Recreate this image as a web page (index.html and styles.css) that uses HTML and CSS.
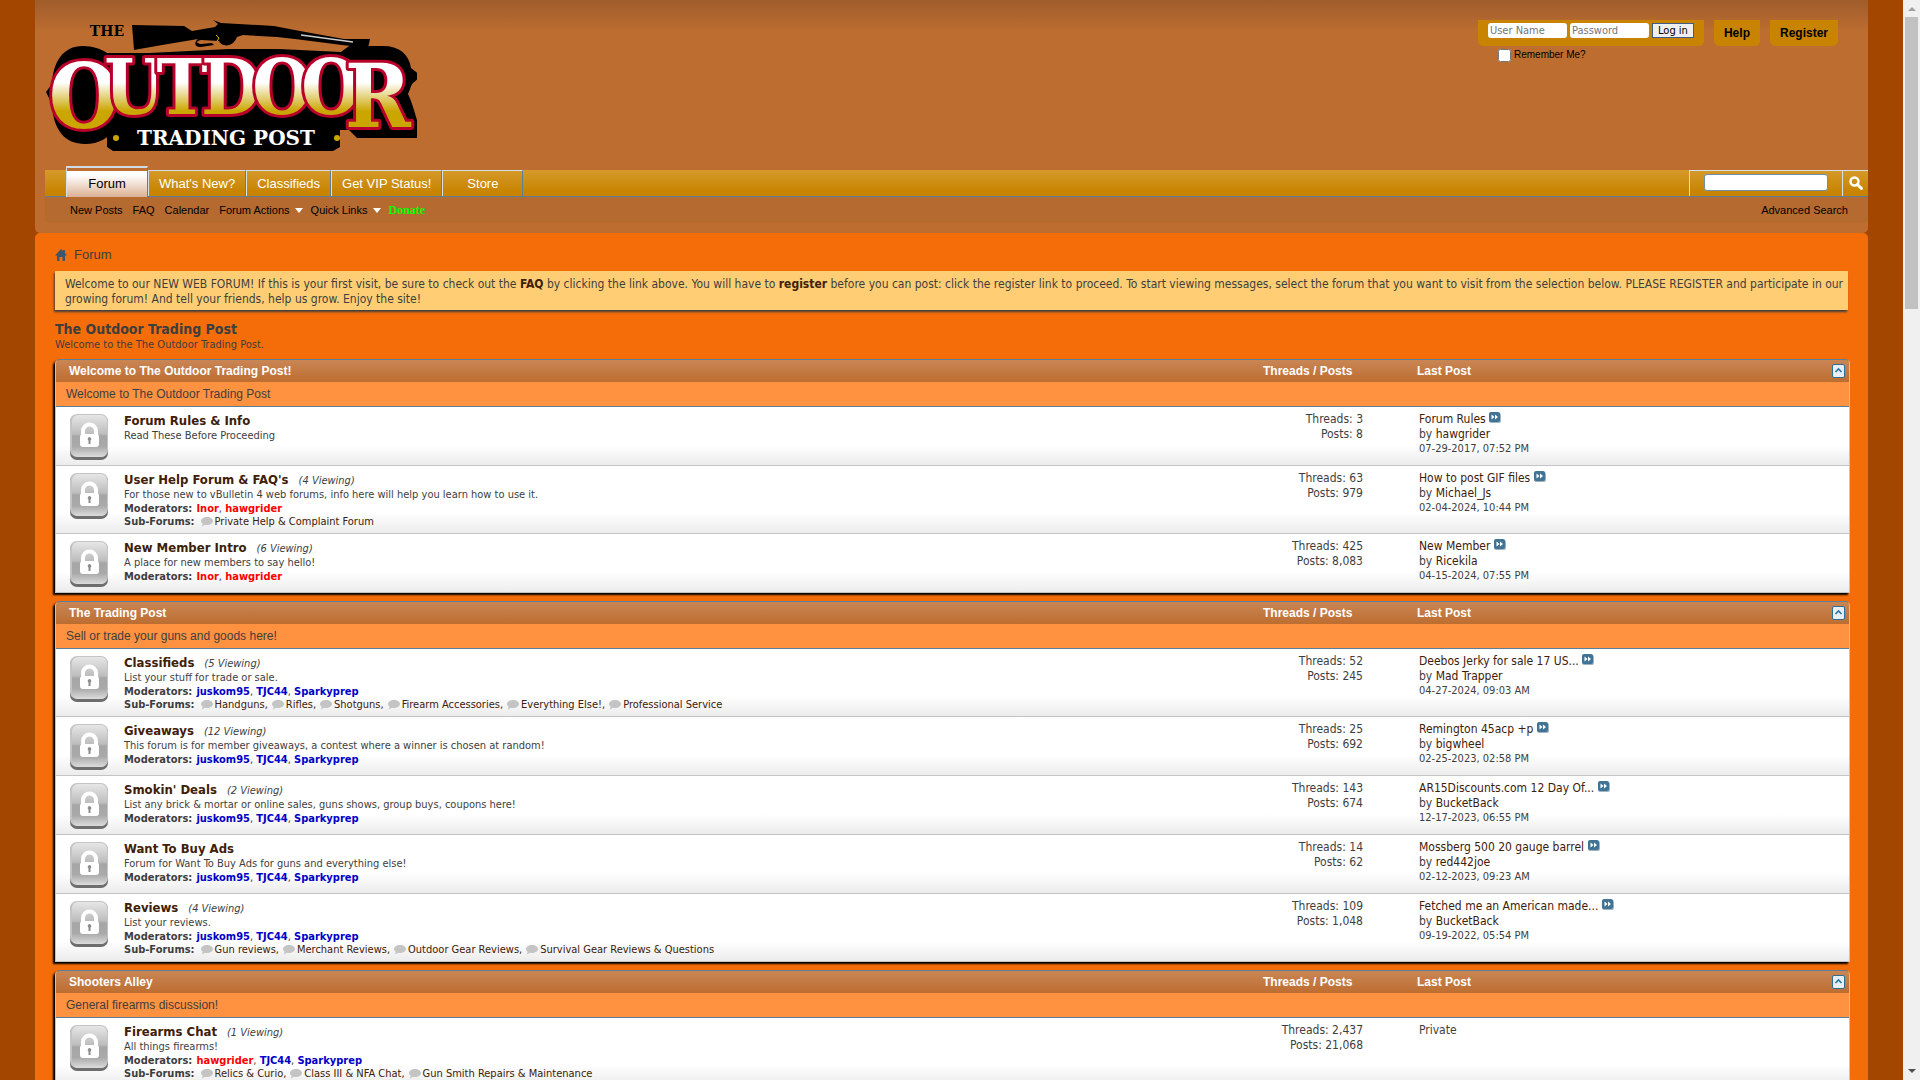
FILE: index.html
```html
<!DOCTYPE html>
<html lang="en">
<head>
<meta charset="utf-8">
<title>The Outdoor Trading Post</title>
<link rel="stylesheet" href="styles.css">
</head>
<body>
<svg class="defs" aria-hidden="true">
  <defs>
    <linearGradient id="btn" x1="0" y1="0" x2="0" y2="1">
      <stop offset="0" stop-color="#e6e6e6"/><stop offset=".45" stop-color="#bdbdbd"/>
      <stop offset=".5" stop-color="#a6a6a6"/><stop offset=".75" stop-color="#a9a9a9"/><stop offset="1" stop-color="#dcdcdc"/>
    </linearGradient>
    <linearGradient id="gold" gradientUnits="userSpaceOnUse" x1="0" y1="30" x2="0" y2="120">
      <stop offset="0" stop-color="#fff"/><stop offset=".36" stop-color="#fff"/>
      <stop offset=".68" stop-color="#cba600"/><stop offset="1" stop-color="#cba600"/>
    </linearGradient>
    <symbol id="lock" viewBox="0 0 40 48">
      <rect x="1" y="2" width="38" height="45" rx="7" fill="#6e6e6e"/>
      <rect x="1" y="1" width="38" height="43" rx="7" fill="#c4c4c4"/>
      <rect x="3" y="2" width="35" height="42" rx="6" fill="url(#btn)"/>
      <path d="M14 23v-5a6.500 6.500 0 0 1 13 0v5" fill="none" stroke="#fff" stroke-width="4"/>
      <rect x="11" y="21" width="19" height="13" rx="3" fill="#fff"/>
      <path d="M20.500 24a2 2 0 0 1 1 3.600v3.400h-2v-3.400a2 2 0 0 1 1-3.600z" fill="#8c8c8c"/>
    </symbol>
    <symbol id="bubble" viewBox="0 0 12 10">
      <path d="M6 0c3.300 0 6 1.800 6 4s-2.700 4-6 4c-.7 0-1.400-.1-2-.2L1 9.500l.6-2.900C.6 5.900 0 5 0 4c0-2.200 2.700-4 6-4z" fill="#c4c4c4"/>
    </symbol>
    <symbol id="go" viewBox="0 0 12 11">
      <rect width="12" height="10" y="1" rx="2" fill="#9fb4c0"/><rect width="11" height="10" rx="2" fill="#417394"/>
      <path d="M2.500 2.500l3 2.500-3 2.500zM6 2.500l3 2.500-3 2.500z" fill="#fff"/>
    </symbol>
    <symbol id="up" viewBox="0 0 13 14">
      <rect x=".5" y=".5" width="12" height="13" rx="1.500" fill="#e8eef2" stroke="#2a6f96"/>
      <path d="M3.500 8l3-3 3 3" fill="none" stroke="#1f7aa6" stroke-width="1.600"/>
    </symbol>
    <symbol id="down" viewBox="0 0 8 5"><path d="M0 0h8L4 5z" fill="#fff"/></symbol>
  </defs>
</svg>

<div class="page">
  <header class="header">
    <div class="top">
      <a class="logo" href="#" aria-label="The Outdoor Trading Post">
        <svg width="372" height="134" viewBox="0 0 372 134">
          <path d="M1 72l6-8C8 42 18 26 38 26c10 0 18 3 24 7h42l80-4h50l62 3 8-6h34c16 0 26 8 28 22l10 8-9 8-4 10c4 8 7 20 9 26l2 18h-62l-8-8H82L70 108c-6 10-16 16-30 16C20 124 8 110 7 84z" fill="#000"/>
          <g class="word">
            <text x="39" y="108" font-size="90">O</text><text x="89" y="94" font-size="76">U</text><text x="137" y="94" font-size="76">T</text><text x="186" y="94" font-size="76">D</text><text x="237" y="94" font-size="76">O</text><text x="286" y="94" font-size="76">O</text><text x="333" y="107" font-size="88">R</text>
          </g>
          <path d="M66 105h222l7 4v18l-7 4H68l-6-4v-18z" fill="#000"/>
          <path d="M87 5l52 1 8 5 23-4 3-3-5-4 8 3 53 3 26 5 44 8 26 0-2 9-26-3-47-6-18-2-34-2-6 2c-4 11-16 10-18 4l-18-1c-6 1-4 4 0 4l11-1 2 2-13 2c-7 0-7-5-3-8l-36 6-28 5z" fill="#000"/>
          <path d="M256 15l52 7" stroke="#ccc" stroke-width="1.500"/>
          <path d="M171 15l3 3-2 3" stroke="#d8b400" fill="none"/>
          <text class="slab" x="62" y="16" font-size="14" text-anchor="middle">THE</text>
          <text class="slab pale" x="181" y="125" font-size="20" text-anchor="middle">TRADING POST</text>
          <circle cx="71" cy="118" r="3" fill="#cba600"/><circle cx="292" cy="118" r="3" fill="#cba600"/>
        </svg>
      </a>
      <div class="account">
        <form class="login">
          <div class="login-box">
            <input type="text" placeholder="User Name" aria-label="User Name">
            <input type="password" placeholder="Password" aria-label="Password">
            <button type="button">Log in</button>
          </div>
          <label class="remember"><input type="checkbox"> Remember Me?</label>
        </form>
        <a class="pill" href="#">Help</a>
        <a class="pill" href="#">Register</a>
      </div>
    </div>
    <div class="navbox">
      <nav class="tabs">
        <a class="tab active" href="#"><span>Forum</span></a>
        <a class="tab" href="#">What's New?</a>
        <a class="tab" href="#">Classifieds</a>
        <a class="tab" href="#">Get VIP Status!</a>
        <a class="tab last" href="#">Store</a>
        <form class="search">
          <div class="field"><input type="text" aria-label="Search"></div>
          <button type="button" aria-label="Search"><svg width="14" height="14" viewBox="0 0 14 14" fill="none" stroke="#fff"><circle cx="5.500" cy="5.500" r="4" stroke-width="2.400"/><path d="M8.500 8.500l4 4" stroke-width="3" stroke-linecap="round"/></svg></button>
        </form>
      </nav>
      <nav class="subnav">
        <a href="#">New Posts</a><a href="#">FAQ</a><a href="#">Calendar</a>
        <a href="#">Forum Actions <svg width="8" height="5"><use href="#down"/></svg></a>
        <a href="#">Quick Links <svg width="8" height="5"><use href="#down"/></svg></a>
        <a class="donate" href="#">Donate</a>
        <a class="advanced" href="#">Advanced Search</a>
      </nav>
    </div>
  </header>

  <main class="main">
    <nav class="crumbs"><svg width="12" height="12" viewBox="0 0 12 12"><path d="M6 0l2 2V1h2v3l2 2.500h-2V12H7.500V8h-3v4H2V6.500H0z" fill="#3d566b"/></svg><span>Forum</span></nav>
    <p class="notice">Welcome to our NEW WEB FORUM! If this is your first visit, be sure to check out the <a href="#">FAQ</a> by clicking the link above. You will have to <a href="#">register</a> before you can post: click the register link to proceed. To start viewing messages, select the forum that you want to visit from the selection below. PLEASE REGISTER and participate in our growing forum! And tell your friends, help us grow. Enjoy the site!</p>
    <h1>The Outdoor Trading Post</h1>
    <p class="tagline">Welcome to the The Outdoor Trading Post.</p>

    <table class="cat">
      <thead>
        <tr><th class="c-forum">Welcome to The Outdoor Trading Post!</th><th class="c-stats">Threads / Posts</th><th class="c-last"><div>Last Post<button type="button" aria-label="Collapse"><svg width="13" height="14"><use href="#up"/></svg></button></div></th></tr>
        <tr><td class="about" colspan="3">Welcome to The Outdoor Trading Post</td></tr>
      </thead>
      <tbody>
        <tr>
          <td><div class="forum"><svg width="40" height="48"><use href="#lock"/></svg><div><h2><a href="#">Forum Rules &amp; Info</a></h2><p>Read These Before Proceeding</p></div></div></td>
          <td class="stats">Threads: 3<br>Posts: 8</td>
          <td class="last"><a href="#">Forum Rules</a> <svg width="12" height="11"><use href="#go"/></svg><br>by <a href="#">hawgrider</a><p>07-29-2017, 07:52 PM</p></td>
        </tr>
        <tr>
          <td><div class="forum"><svg width="40" height="48"><use href="#lock"/></svg><div><h2><a href="#">User Help Forum &amp; FAQ's</a><em>(4 Viewing)</em></h2><p>For those new to vBulletin 4 web forums, info here will help you learn how to use it.</p><p><b>Moderators:</b> <a class="admin" href="#">Inor</a>, <a class="admin" href="#">hawgrider</a></p><p class="subs"><b>Sub-Forums:</b><span><svg width="12" height="10"><use href="#bubble"/></svg><a href="#">Private Help &amp; Complaint Forum</a></span></p></div></div></td>
          <td class="stats">Threads: 63<br>Posts: 979</td>
          <td class="last"><a href="#">How to post GIF files</a> <svg width="12" height="11"><use href="#go"/></svg><br>by <a href="#">Michael_Js</a><p>02-04-2024, 10:44 PM</p></td>
        </tr>
        <tr>
          <td><div class="forum"><svg width="40" height="48"><use href="#lock"/></svg><div><h2><a href="#">New Member Intro</a><em>(6 Viewing)</em></h2><p>A place for new members to say hello!</p><p><b>Moderators:</b> <a class="admin" href="#">Inor</a>, <a class="admin" href="#">hawgrider</a></p></div></div></td>
          <td class="stats">Threads: 425<br>Posts: 8,083</td>
          <td class="last"><a href="#">New Member</a> <svg width="12" height="11"><use href="#go"/></svg><br>by <a href="#">Ricekila</a><p>04-15-2024, 07:55 PM</p></td>
        </tr>
      </tbody>
    </table>

    <table class="cat">
      <thead>
        <tr><th class="c-forum">The Trading Post</th><th class="c-stats">Threads / Posts</th><th class="c-last"><div>Last Post<button type="button" aria-label="Collapse"><svg width="13" height="14"><use href="#up"/></svg></button></div></th></tr>
        <tr><td class="about" colspan="3">Sell or trade your guns and goods here!</td></tr>
      </thead>
      <tbody>
        <tr>
          <td><div class="forum"><svg width="40" height="48"><use href="#lock"/></svg><div><h2><a href="#">Classifieds</a><em>(5 Viewing)</em></h2><p>List your stuff for trade or sale.</p><p><b>Moderators:</b> <a class="mod" href="#">juskom95</a>, <a class="mod" href="#">TJC44</a>, <a class="mod" href="#">Sparkyprep</a></p><p class="subs"><b>Sub-Forums:</b><span><svg width="12" height="10"><use href="#bubble"/></svg><a href="#">Handguns,</a></span><span><svg width="12" height="10"><use href="#bubble"/></svg><a href="#">Rifles,</a></span><span><svg width="12" height="10"><use href="#bubble"/></svg><a href="#">Shotguns,</a></span><span><svg width="12" height="10"><use href="#bubble"/></svg><a href="#">Firearm Accessories,</a></span><span><svg width="12" height="10"><use href="#bubble"/></svg><a href="#">Everything Else!,</a></span><span><svg width="12" height="10"><use href="#bubble"/></svg><a href="#">Professional Service</a></span></p></div></div></td>
          <td class="stats">Threads: 52<br>Posts: 245</td>
          <td class="last"><a href="#">Deebos Jerky for sale 17 US...</a> <svg width="12" height="11"><use href="#go"/></svg><br>by <a href="#">Mad Trapper</a><p>04-27-2024, 09:03 AM</p></td>
        </tr>
        <tr>
          <td><div class="forum"><svg width="40" height="48"><use href="#lock"/></svg><div><h2><a href="#">Giveaways</a><em>(12 Viewing)</em></h2><p>This forum is for member giveaways, a contest where a winner is chosen at random!</p><p><b>Moderators:</b> <a class="mod" href="#">juskom95</a>, <a class="mod" href="#">TJC44</a>, <a class="mod" href="#">Sparkyprep</a></p></div></div></td>
          <td class="stats">Threads: 25<br>Posts: 692</td>
          <td class="last"><a href="#">Remington 45acp +p</a> <svg width="12" height="11"><use href="#go"/></svg><br>by <a href="#">bigwheel</a><p>02-25-2023, 02:58 PM</p></td>
        </tr>
        <tr>
          <td><div class="forum"><svg width="40" height="48"><use href="#lock"/></svg><div><h2><a href="#">Smokin' Deals</a><em>(2 Viewing)</em></h2><p>List any brick &amp; mortar or online sales, guns shows, group buys, coupons here!</p><p><b>Moderators:</b> <a class="mod" href="#">juskom95</a>, <a class="mod" href="#">TJC44</a>, <a class="mod" href="#">Sparkyprep</a></p></div></div></td>
          <td class="stats">Threads: 143<br>Posts: 674</td>
          <td class="last"><a href="#">AR15Discounts.com 12 Day Of...</a> <svg width="12" height="11"><use href="#go"/></svg><br>by <a href="#">BucketBack</a><p>12-17-2023, 06:55 PM</p></td>
        </tr>
        <tr>
          <td><div class="forum"><svg width="40" height="48"><use href="#lock"/></svg><div><h2><a href="#">Want To Buy Ads</a></h2><p>Forum for Want To Buy Ads for guns and everything else!</p><p><b>Moderators:</b> <a class="mod" href="#">juskom95</a>, <a class="mod" href="#">TJC44</a>, <a class="mod" href="#">Sparkyprep</a></p></div></div></td>
          <td class="stats">Threads: 14<br>Posts: 62</td>
          <td class="last"><a href="#">Mossberg 500 20 gauge barrel</a> <svg width="12" height="11"><use href="#go"/></svg><br>by <a href="#">red442joe</a><p>02-12-2023, 09:23 AM</p></td>
        </tr>
        <tr>
          <td><div class="forum"><svg width="40" height="48"><use href="#lock"/></svg><div><h2><a href="#">Reviews</a><em>(4 Viewing)</em></h2><p>List your reviews.</p><p><b>Moderators:</b> <a class="mod" href="#">juskom95</a>, <a class="mod" href="#">TJC44</a>, <a class="mod" href="#">Sparkyprep</a></p><p class="subs"><b>Sub-Forums:</b><span><svg width="12" height="10"><use href="#bubble"/></svg><a href="#">Gun reviews,</a></span><span><svg width="12" height="10"><use href="#bubble"/></svg><a href="#">Merchant Reviews,</a></span><span><svg width="12" height="10"><use href="#bubble"/></svg><a href="#">Outdoor Gear Reviews,</a></span><span><svg width="12" height="10"><use href="#bubble"/></svg><a href="#">Survival Gear Reviews &amp; Questions</a></span></p></div></div></td>
          <td class="stats">Threads: 109<br>Posts: 1,048</td>
          <td class="last"><a href="#">Fetched me an American made...</a> <svg width="12" height="11"><use href="#go"/></svg><br>by <a href="#">BucketBack</a><p>09-19-2022, 05:54 PM</p></td>
        </tr>
      </tbody>
    </table>

    <table class="cat">
      <thead>
        <tr><th class="c-forum">Shooters Alley</th><th class="c-stats">Threads / Posts</th><th class="c-last"><div>Last Post<button type="button" aria-label="Collapse"><svg width="13" height="14"><use href="#up"/></svg></button></div></th></tr>
        <tr><td class="about" colspan="3">General firearms discussion!</td></tr>
      </thead>
      <tbody>
        <tr>
          <td><div class="forum"><svg width="40" height="48"><use href="#lock"/></svg><div><h2><a href="#">Firearms Chat</a><em>(1 Viewing)</em></h2><p>All things firearms!</p><p><b>Moderators:</b> <a class="admin" href="#">hawgrider</a>, <a class="mod" href="#">TJC44</a>, <a class="mod" href="#">Sparkyprep</a></p><p class="subs"><b>Sub-Forums:</b><span><svg width="12" height="10"><use href="#bubble"/></svg><a href="#">Relics &amp; Curio,</a></span><span><svg width="12" height="10"><use href="#bubble"/></svg><a href="#">Class III &amp; NFA Chat,</a></span><span><svg width="12" height="10"><use href="#bubble"/></svg><a href="#">Gun Smith Repairs &amp; Maintenance</a></span></p></div></div></td>
          <td class="stats">Threads: 2,437<br>Posts: 21,068</td>
          <td class="last">Private</td>
        </tr>
      </tbody>
    </table>
  </main>
</div>

<div class="scrollbar" aria-hidden="true"><i class="arrow-up"></i><div class="thumb"></div><i class="arrow-down"></i></div>
</body>
</html>
```
FILE: styles.css
```css
* { box-sizing: border-box; }
html { height: 100vh; overflow: hidden; background: #a34700; }
body { margin: 0; padding: 0 52px 0 35px; font: 12px/15px "DejaVu Sans Condensed", Tahoma, "DejaVu Sans", sans-serif; color: #3e3e3e; }
a { color: inherit; text-decoration: none; }
p, h1, h2 { margin: 0; }
.defs { position: absolute; width: 0; height: 0; }

/* header */
.header { padding: 0 0 10px 10px; border-radius: 0 0 5px 5px; background: linear-gradient(#9f5d2b, #bd6d30 32px); font-family: "Liberation Sans", Arial, sans-serif; color: #000; }
.top { display: flex; justify-content: space-between; align-items: flex-start; min-height: 170px; padding: 20px 30px 0 0; }
.logo svg { display: block; }
.word { font-family: "DejaVu Serif Condensed", "DejaVu Serif", serif; font-weight: bold; text-anchor: middle; fill: url(#gold); stroke: #b8002a; stroke-width: 6px; stroke-linejoin: round; paint-order: stroke; }
.slab { font-family: "DejaVu Serif", serif; font-weight: bold; }
.pale { fill: #fff; }
.account { display: flex; align-items: flex-start; gap: 10px; }
.login-box { display: flex; gap: 3px; height: 26px; padding: 3px 10px; border-radius: 0 0 5px 5px; background: #c88400; }
.login-box input { width: 79px; height: 15px; padding: 0 2px; border: 0; border-radius: 3px; font: 11px "DejaVu Sans Condensed", Tahoma, sans-serif; }
.login-box input::placeholder { color: #757575; }
.login-box button { width: 42px; height: 15px; padding: 0; border: 1px solid #3f5b8b; background: #efefef; font: 11px/13px "DejaVu Sans Condensed", Tahoma, sans-serif; }
.remember { display: flex; align-items: center; gap: 3px; margin: 2px 0 0 20px; font-size: 10px; line-height: 14px; }
.remember input { width: 13px; height: 13px; margin: 0; }
.pill { height: 26px; padding: 0 10px; border-radius: 0 0 5px 5px; background: #c88400; font-size: 12px; font-weight: bold; line-height: 26px; }

.navbox { border-radius: 0 0 5px 5px; background: #b56a30; }
.tabs { display: flex; align-items: flex-end; height: 27px; padding-left: 21px; border-bottom: 1px solid #5a7f97; background: linear-gradient(#d59a2c, #c88400 22px); font-size: 13px; color: #fff; }
.tab { height: 26px; padding: 0 10px; border-top: 1px solid #d5dfe6; border-left: 1px solid #d5dfe6; border-right: 1px solid #5a7f97; line-height: 25px; }
.tab.last { min-width: 81px; text-align: center; }
.tab.active { height: 31px; margin-bottom: -1px; padding: 3px 0 0; border-top: 2px solid #cfdbe6; background: #bd6d30; color: #000; }
.tab.active span { display: block; width: 80px; height: 26px; background: linear-gradient(#fff 4px, #dcb193); line-height: 25px; text-align: center; }
.search { display: flex; height: 26px; margin-left: auto; }
.field { padding: 3px 14px 0; border: solid #d5dfe6; border-width: 1px 0 0 1px; line-height: 0; }
.field input { width: 124px; height: 17px; border: 1px solid #6b90a8; border-radius: 3px; }
.search button { display: flex; justify-content: center; width: 26px; padding: 5px 0 0; border: solid #d5dfe6; border-width: 1px 0 0 1px; background: none; }
.subnav { display: flex; align-items: center; gap: 10px; height: 26px; padding: 0 20px 0 25px; font-size: 11px; }
.subnav svg { margin: 0 -2px 1px 2px; }
.donate { font: bold 12px "Liberation Serif", serif; color: #0f0; }
.advanced { margin-left: auto; }

/* content */
.main { padding: 14px 18px 20px 20px; border-radius: 5px 5px 0 0; background: #f56d09; }
.crumbs { display: flex; align-items: center; gap: 7px; height: 15px; font: 13px "Liberation Sans", Arial, sans-serif; }
.notice { margin: 9px 2px 0 0; padding: 6px 4px 3px 10px; background: #ffce74; box-shadow: -1px 2px 2px #3e3e3e; }
.notice a { font-weight: bold; color: #3e2008; }
h1 { margin-top: 10px; font-size: 14px; line-height: 18px; }
.tagline { font-size: 11px; line-height: 14px; }

.cat { width: 100%; margin-top: 8px; border: 1px solid #c4c4c4; border-top-color: #5a7f97; border-radius: 5px 5px 0 0; border-spacing: 0; table-layout: fixed; box-shadow: -2px 2px 2px #000; }
.tagline + .cat { margin-top: 7px; }
.cat td, .cat th { padding: 0; vertical-align: top; }
.cat th { height: 22px; background: linear-gradient(#c98655, #bd6d30); color: #fff; font: bold 12px/22px "Liberation Sans", Arial, sans-serif; text-align: left; }
.cat .c-forum { padding-left: 13px; border-top-left-radius: 4px; }
.c-stats { width: 154px; }
.c-last { width: 432px; border-top-right-radius: 4px; }
.c-last div { display: flex; align-items: center; justify-content: space-between; }
.c-last button { width: 13px; height: 14px; margin-right: 4px; padding: 0; border: 0; background: none; line-height: 0; }
.cat .about { height: 25px; padding-left: 10px; border-bottom: 1px solid #5a7f97; background: #ff9240; font: 12px/24px "Liberation Sans", Arial, sans-serif; }
.cat tbody td { border-bottom: 1px solid #c4c4c4; background: #fff linear-gradient(to top, #ececec, #fff 20px); }
.cat tbody tr:last-child td { border-bottom: 0; }
.forum { display: flex; gap: 15px; padding: 6px 0 4px 13px; }
.forum > svg { flex: none; }
.forum h2 { height: 16px; font-size: 13px; line-height: 16px; color: #3e2008; }
.forum em { margin-left: 10px; font-size: 11px; font-weight: normal; color: #3e3e3e; }
.forum p { font-size: 11px; line-height: 14px; }
.forum p:nth-of-type(2) { line-height: 13px; }
.forum b { margin-right: 1px; }
.forum a { color: #3e2008; }
.forum a.admin { font-weight: bold; color: #f00; }
.forum a.mod { font-weight: bold; color: #0000c8; }
.subs { display: flex; gap: 4px; }
.subs b + span { margin-left: 1px; }
.subs span { display: flex; align-items: center; gap: 2px; }
.cat .stats { padding: 5px 54px 0 0; text-align: right; }
.cat .last { padding: 5px 0 0 2px; }
.last a { color: #3e2008; }
.last p { font-size: 11px; line-height: 14px; }

/* window scrollbar */
.scrollbar { position: fixed; top: 0; right: 0; display: flex; flex-direction: column; align-items: center; width: 17px; height: 100vh; padding: 7px 0; background: #f0f0f0; }
.arrow-up { border: solid transparent; border-width: 0 4px 4px; border-bottom-color: #a0a0a0; }
.arrow-down { margin-top: auto; border: solid transparent; border-width: 4px 4px 0; border-top-color: #505050; }
.thumb { width: 13px; height: 27vh; margin-top: 6px; background: #c1c1c1; }
```
